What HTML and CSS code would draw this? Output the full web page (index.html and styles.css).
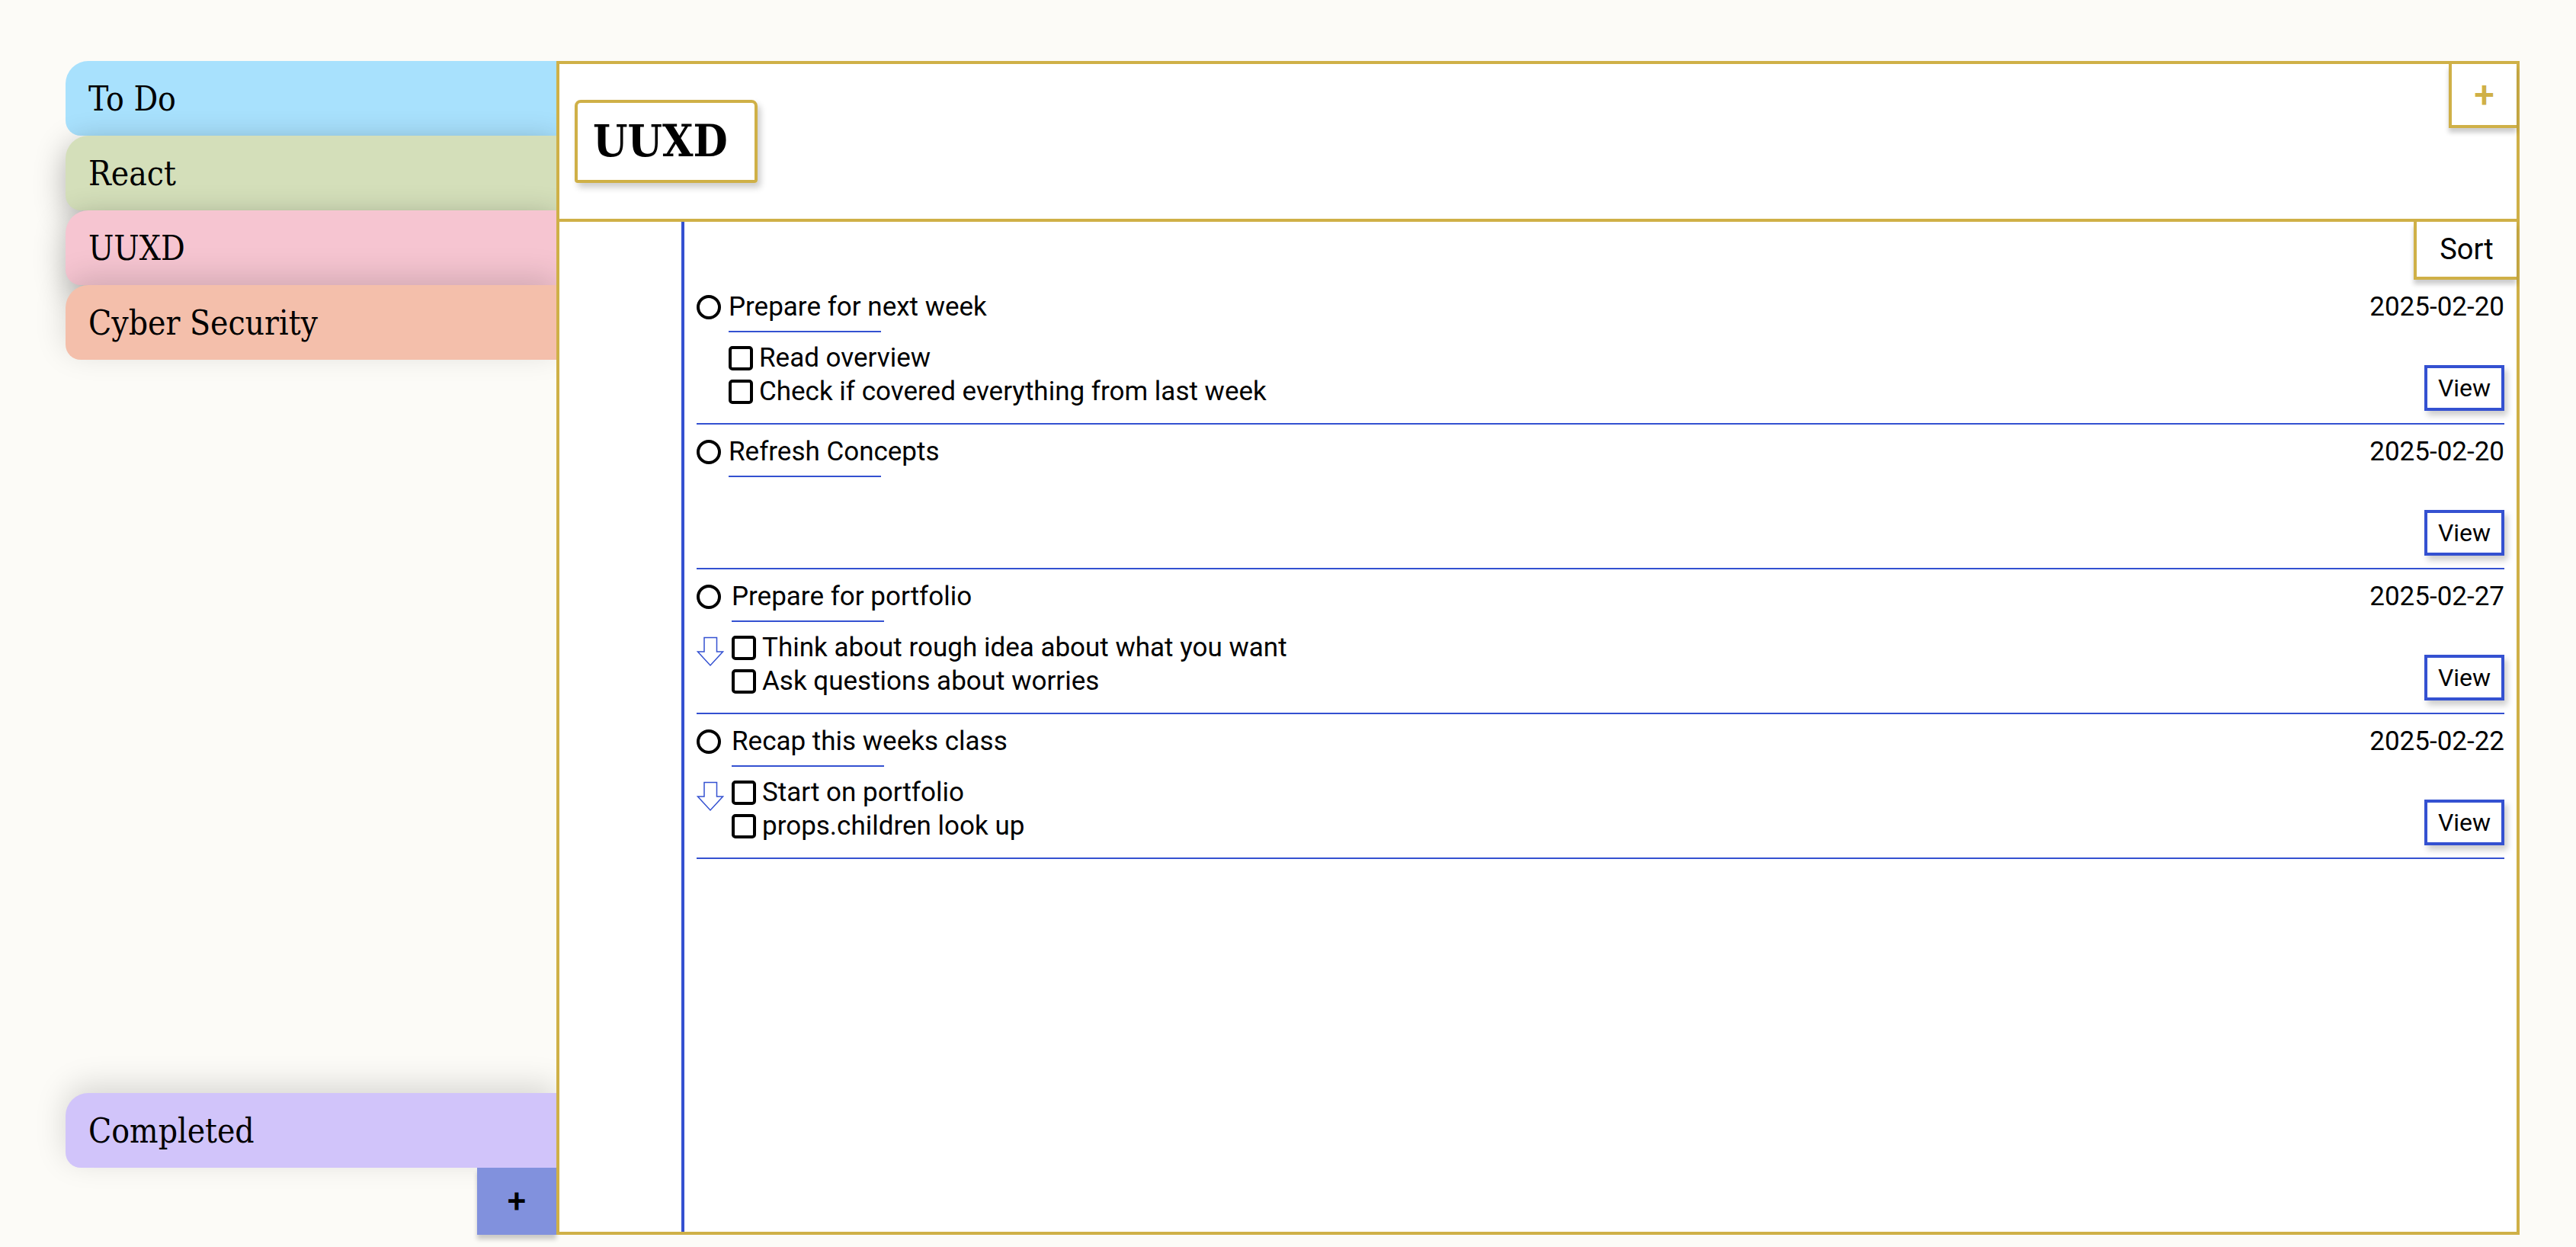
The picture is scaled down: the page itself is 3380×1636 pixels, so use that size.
FILE: index.html
```html
<!DOCTYPE html>
<html lang="en">
<head>
<meta charset="utf-8">
<meta name="viewport" content="width=device-width, initial-scale=1">
<title>UUXD</title>
<link rel="stylesheet" href="styles.css">
</head>
<body>
<div class="app">
  <aside class="sidebar">
    <nav class="tabs" aria-label="Lists">
      <a class="tab tab-blue" href="#todo">To Do</a>
      <a class="tab tab-green" href="#react">React</a>
      <a class="tab tab-pink" href="#uuxd">UUXD</a>
      <a class="tab tab-orange" href="#security">Cyber Security</a>
      <a class="tab tab-purple" href="#completed">Completed</a>
    </nav>
    <button class="add-list" type="button" aria-label="Add list">+</button>
  </aside>
  <main class="page">
    <header class="page-head">
      <h1 class="title">UUXD</h1>
      <button class="add-task" type="button" aria-label="Add task">+</button>
    </header>
    <div class="paper">
      <div class="sheet">
        <button class="sort" type="button">Sort</button>
        <ul class="tasks">
          <li class="task">
            <div class="mark"><input class="circle" type="radio" id="t1"></div>
            <div class="body">
              <label class="name" for="t1">Prepare for next week</label>
              <label class="sub"><input class="box" type="checkbox">Read overview</label>
              <label class="sub"><input class="box" type="checkbox">Check if covered everything from last week</label>
            </div>
            <div class="side"><time>2025-02-20</time><button class="view" type="button">View</button></div>
          </li>
          <li class="task">
            <div class="mark"><input class="circle" type="radio" id="t2"></div>
            <div class="body">
              <label class="name" for="t2">Refresh Concepts</label>
            </div>
            <div class="side"><time>2025-02-20</time><button class="view" type="button">View</button></div>
          </li>
          <li class="task">
            <div class="mark"><input class="circle" type="radio" id="t3">
              <svg class="arrow" viewBox="0 0 36 40" aria-hidden="true"><path d="M10 1.500H26.500V20H34.500L18 38L1.500 20H10Z"/></svg></div>
            <div class="body">
              <label class="name" for="t3">Prepare for portfolio</label>
              <label class="sub"><input class="box" type="checkbox">Think about rough idea about what you want</label>
              <label class="sub"><input class="box" type="checkbox">Ask questions about worries</label>
            </div>
            <div class="side"><time>2025-02-27</time><button class="view" type="button">View</button></div>
          </li>
          <li class="task">
            <div class="mark"><input class="circle" type="radio" id="t4">
              <svg class="arrow" viewBox="0 0 36 40" aria-hidden="true"><path d="M10 1.500H26.500V20H34.500L18 38L1.500 20H10Z"/></svg></div>
            <div class="body">
              <label class="name" for="t4">Recap this weeks class</label>
              <label class="sub"><input class="box" type="checkbox">Start on portfolio</label>
              <label class="sub"><input class="box" type="checkbox">props.children look up</label>
            </div>
            <div class="side"><time>2025-02-22</time><button class="view" type="button">View</button></div>
          </li>
        </ul>
      </div>
    </div>
  </main>
</div>
</body>
</html>
```
FILE: styles.css
```css
:root {
  --gold: #cfb047;
  --blue: #3451d1;
}

* {
  box-sizing: border-box;
}

body {
  margin: 0;
  background: #fcfbf7;
  color: #000;
  font-family: Roboto, sans-serif;
  font-size: 35px;
}

button {
  margin: 0;
  padding: 0;
  color: inherit;
  font-family: inherit;
  cursor: pointer;
}

.app {
  display: flex;
  min-height: 100vh;
  padding: 80px 74px 16px 86px;
}

.sidebar {
  display: flex;
  flex-direction: column;
  width: 20%;
}

.tabs {
  display: flex;
  flex: 1;
  flex-direction: column;
}

.tab {
  display: flex;
  align-items: center;
  height: 98px;
  padding-left: 30px;
  border-radius: 30px 0 0 20px;
  box-shadow: 0 -10px 40px rgba(0, 0, 0, 0.15);
  color: inherit;
  font-family: "DejaVu Serif Condensed", "DejaVu Serif", serif;
  font-size: 44px;
  text-decoration: none;
}

.tab-blue {
  background: #a8e1fd;
  box-shadow: none;
}

.tab-green {
  background: #d4dfba;
  box-shadow: 0 10px 40px rgba(0, 0, 0, 0.3);
}

.tab-pink {
  background: #f6c5d1;
  box-shadow: 0 10px 40px rgba(0, 0, 0, 0.3);
}

.tab-orange {
  background: #f4bfab;
}

.tab-purple {
  margin-top: auto;
  background: #d1c4fa;
}

.add-list {
  align-self: flex-end;
  width: 104px;
  height: 88px;
  border: 0;
  background: #8191dd;
  box-shadow: 0 6px 6px rgba(0, 0, 0, 0.2);
  font-size: 44px;
  font-weight: 500;
}

.page {
  position: relative;
  display: flex;
  flex: 1;
  flex-direction: column;
  border: 4px solid var(--gold);
  background: #fff;
}

.page-head {
  display: flex;
  align-items: center;
  justify-content: space-between;
  height: 207px;
  padding-left: 20px;
  border-bottom: 4px solid var(--gold);
}

.title {
  min-width: 240px;
  margin: 0;
  padding: 0 20px;
  border: 4px solid var(--gold);
  border-radius: 8px 8px 4px 4px;
  box-shadow: 4px 6px 8px rgba(0, 0, 0, 0.2);
  font-family: "DejaVu Serif Condensed", "DejaVu Serif", serif;
  font-size: 58px;
  line-height: 101px;
}

.add-task,
.sort {
  border: solid var(--gold);
  border-width: 0 0 4px 4px;
  background: #fff;
  box-shadow: 0 6px 6px rgba(0, 0, 0, 0.2);
}

.add-task {
  align-self: flex-start;
  width: 89px;
  height: 84px;
  color: var(--gold);
  font-size: 48px;
  font-weight: 500;
}

.sort {
  align-self: flex-end;
  width: 135px;
  height: 76px;
  font-size: 38px;
}

.paper {
  display: flex;
  flex: 1;
  padding-left: 160px;
}

.sheet {
  display: flex;
  flex: 1;
  flex-direction: column;
  border-left: 4px solid var(--blue);
}

.tasks {
  margin: 0;
  padding: 0 16px;
  list-style: none;
}

.task {
  display: flex;
  min-height: 190px;
  padding: 16px 0;
  border-bottom: 2px solid var(--blue);
}

.mark {
  display: flex;
  flex-direction: column;
  align-items: flex-start;
  gap: 36px;
  padding: 4px 10px 0 0;
}

.body {
  display: flex;
  flex: 1;
  flex-direction: column;
  align-items: flex-start;
}

.name {
  position: relative;
  margin-bottom: 12px;
  padding-bottom: 13px;
  line-height: 40px;
}

.name::after {
  position: absolute;
  bottom: 0;
  left: 0;
  width: 200px;
  height: 2px;
  background: var(--blue);
  content: "";
}

.sub {
  display: flex;
  align-items: center;
  gap: 8px;
  line-height: 44px;
}

.circle,
.box {
  width: 32px;
  height: 32px;
  margin: 0;
  border: 4px solid #000;
  background: #fff;
  appearance: none;
}

.circle {
  border-radius: 50%;
}

.box {
  border-radius: 5px;
}

.mark:has(.arrow) {
  padding-right: 10px;
}

.arrow {
  width: 36px;
  height: 40px;
  fill: none;
  stroke: var(--blue);
  stroke-width: 1.5;
}

.side {
  display: flex;
  flex-direction: column;
  align-items: flex-end;
  justify-content: space-between;
  line-height: 40px;
}

.view {
  width: 105px;
  height: 60px;
  border: 4px solid var(--blue);
  background: #fff;
  box-shadow: 4px 6px 8px rgba(0, 0, 0, 0.2);
  font-size: 32px;
}
```
